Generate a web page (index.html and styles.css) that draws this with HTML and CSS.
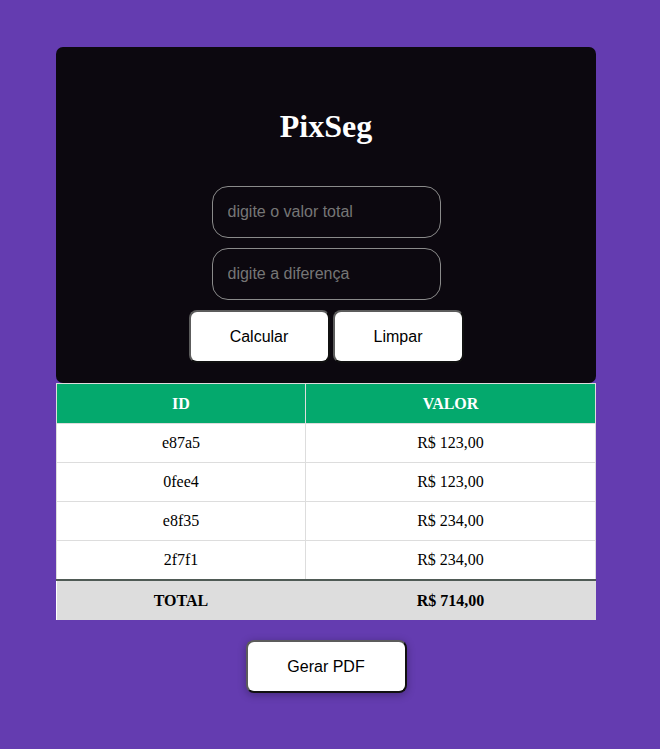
FILE: index.html
```html
<!DOCTYPE html>
<html lang="pt-BR">
<head>
<meta charset="utf-8">
<title>PixSeg</title>
<link rel="stylesheet" href="styles.css">
</head>
<body>
<main class="wrap">
  <section class="card">
    <h1 class="title">PixSeg</h1>
    <form class="form">
      <input class="field" type="text" placeholder="digite o valor total">
      <input class="field" type="text" placeholder="digite a diferença">
      <div class="actions">
        <button class="btn btn-calc" type="button">Calcular</button>
        <button class="btn btn-clear" type="button">Limpar</button>
      </div>
    </form>
  </section>
  <table class="table">
    <colgroup><col class="col-id"><col></colgroup>
    <thead>
      <tr><th>ID</th><th>VALOR</th></tr>
    </thead>
    <tbody>
      <tr><td>e87a5</td><td>R$ 123,00</td></tr>
      <tr><td>0fee4</td><td>R$ 123,00</td></tr>
      <tr><td>e8f35</td><td>R$ 234,00</td></tr>
      <tr><td>2f7f1</td><td>R$ 234,00</td></tr>
    </tbody>
    <tfoot>
      <tr><td>TOTAL</td><td>R$ 714,00</td></tr>
    </tfoot>
  </table>
  <div class="pdf-row">
    <button class="btn btn-pdf" type="button">Gerar PDF</button>
  </div>
</main>
</body>
</html>
```
FILE: styles.css
```css
html, body {
  margin: 0;
  padding: 0;
}
body {
  background: #643cb0;
  font-family: "Liberation Serif", "Times New Roman", serif;
  min-height: 749px;
}
.wrap {
  width: 540px;
  margin: 0 0 0 56px;
  padding-top: 47px;
}
.card {
  background: #0c080f;
  border-radius: 7px;
  padding: 40px 0 20px;
  display: flex;
  flex-direction: column;
  align-items: center;
}
.title {
  color: #fff;
  font-size: 32px;
  font-weight: bold;
  margin: 21px 0 41px;
  line-height: 37px;
}
.form {
  display: flex;
  flex-direction: column;
  align-items: center;
}
.field {
  box-sizing: border-box;
  width: 229px;
  height: 52px;
  margin: 0 0 10px;
  border: 1px solid #8a8a8a;
  border-radius: 16px;
  background: #0c080f;
  padding: 0 15px;
  font-family: "Liberation Sans", Arial, sans-serif;
  font-size: 16px;
  color: #fff;
  outline: none;
}
.field::placeholder {
  color: #767676;
}
.actions {
  display: flex;
  gap: 3px;
}
.btn {
  box-sizing: border-box;
  height: 53px;
  background: #fff;
  border: 2px solid;
  border-color: #5c5c5c #111 #111 #5c5c5c;
  border-radius: 8px;
  font-family: "Liberation Sans", Arial, sans-serif;
  font-size: 16px;
  color: #000;
  cursor: pointer;
}
.btn-calc {
  width: 141px;
}
.btn-clear {
  width: 131px;
}
.table {
  width: 540px;
  border-collapse: collapse;
  table-layout: fixed;
  background: #fff;
  font-size: 16px;
}
.col-id {
  width: 249px;
}
.table th {
  background: #04a96d;
  color: #fff;
  font-weight: bold;
  height: 39px;
  padding: 0;
  border: 1px solid #ddd;
}
.table td {
  height: 38px;
  padding: 0;
  text-align: center;
  border: 1px solid #ddd;
  color: #000;
}
.table tfoot td {
  background: #ddd;
  font-weight: bold;
  border: none;
  border-top: 2px solid #4f5a55;
  height: 39px;
}
.pdf-row {
  display: flex;
  justify-content: center;
  padding-top: 20px;
}
.btn-pdf {
  width: 161px;
  box-shadow: 0 2px 8px rgba(0, 0, 0, 0.3);
}
```
